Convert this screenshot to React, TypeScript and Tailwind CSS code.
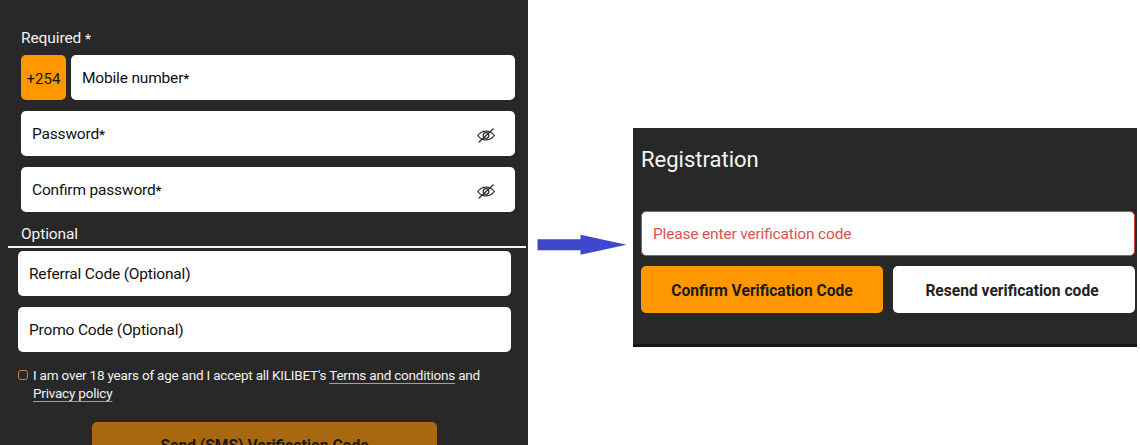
import React from "react";

interface FieldProps {
  label: string;
  required?: boolean;
  secret?: boolean;
}

function EyeOff() {
  return (
    <svg width="20" height="18" viewBox="0 0 20 18" fill="none" stroke="#333333" strokeWidth="1.3" strokeLinecap="round">
      <path d="M1.8 9.500C3.8 6.600 6.6 5.100 10 5.100s6.2 1.500 8.200 4.400c-2 2.900-4.800 4.400-8.200 4.400S3.800 12.400 1.800 9.500z" />
      <circle cx="10" cy="9.500" r="2.800" />
      <path d="M3.100 16.100 17 3" strokeWidth="1.400" />
    </svg>
  );
}

function Asterisk() {
  return <span className="text-[13px] leading-none font-bold">*</span>;
}

function Field({ label, required, secret }: FieldProps) {
  return (
    <div className="flex h-[45px] flex-1 items-center justify-between rounded-[5px] bg-white pr-[19px] pl-[11px] text-[15.5px] leading-[20px] text-[#111111]">
      <span className="pt-px tracking-[-0.18px] [font-feature-settings:'liga']">
        {label}
        {required && <Asterisk />}
      </span>
      {secret && (
        <button type="button" aria-label="Show password" className="mt-[3px]">
          <EyeOff />
        </button>
      )}
    </div>
  );
}

function SignUpForm() {
  return (
    <section className="h-[445px] w-[528px] overflow-hidden bg-[#282828] text-[#f2f2f2]">
      <h2 className="mt-[28px] ml-[21px] text-[15.5px] leading-[20px] tracking-[-0.1px]">
        Required <Asterisk />
      </h2>

      <div className="mt-[7px] mr-[13.5px] ml-[21px] flex flex-col gap-[11px]">
        <div className="flex gap-[5px]">
          <div className="flex h-[45px] w-[45px] items-center justify-center rounded-[5px] bg-[#ff9800] pt-[3px] text-[15px] text-[#151515]">
            +254
          </div>
          <Field label="Mobile number" required />
        </div>
        <div className="flex">
          <Field label="Password" required secret />
        </div>
        <div className="flex">
          <Field label="Confirm password" required secret />
        </div>
      </div>

      <h2 className="mt-[12px] ml-[21px] text-[15.5px] leading-[20px] tracking-[-0.1px]">Optional</h2>
      <div className="mt-[2px] mr-[2px] ml-[8px] h-[2px] bg-[#f5f5f5]" />

      <div className="mt-[3px] mr-[17px] ml-[18px] flex flex-col gap-[11px]">
        <div className="flex">
          <Field label="Referral Code (Optional)" />
        </div>
        <div className="flex">
          <Field label="Promo Code (Optional)" />
        </div>
      </div>

      <div className="mt-[15px] ml-[18px] flex gap-[5px]">
        <span className="mt-[3px] size-[10px] shrink-0 rounded-[3px] border border-[#c98242]" />
        <p className="text-[13.5px] leading-[17.5px] tracking-[-0.21px] whitespace-nowrap">
          I am over 18 years of age and I accept all KILIBET's{" "}
          <a className="underline decoration-[#a0a0a0] decoration-1 underline-offset-[3px] [text-decoration-skip-ink:none]">Terms and conditions</a> and
          <br />
          <a className="underline decoration-[#a0a0a0] decoration-1 underline-offset-[3px] [text-decoration-skip-ink:none]">Privacy policy</a>
        </p>
      </div>

      <button
        type="button"
        className="mt-[20px] ml-[92px] flex h-[46px] w-[345px] items-center justify-center rounded-[5px] bg-[#a7680f] pt-[3px] text-[15.6px] font-bold text-[#1a1a1a]"
      >
        Send (SMS) Verification Code
      </button>
    </section>
  );
}

function Verification() {
  return (
    <section className="mt-[128px] h-[219px] w-[504px] border-b-[3px] border-[#161616] bg-[#282828] pt-[19px] pr-[2px] pl-[8px]">
      <h1 className="text-[22px] leading-[26px] text-[#f5f5f5]">Registration</h1>
      <div className="mt-[38px] flex h-[45px] items-center rounded-[5px] border border-[#d5443d] bg-white pt-[2px] pl-[11px] text-[15.5px] tracking-[-0.17px] text-[#d9534f] [font-feature-settings:'liga']">
        Please enter verification code
      </div>
      <div className="mt-[10px] flex gap-[10px] text-[15.6px] font-bold">
        <button type="button" className="flex h-[47px] w-[242px] items-center justify-center rounded-[5px] bg-[#ff9800] pt-[4px] text-[#1a1a1a]">
          Confirm Verification Code
        </button>
        <button type="button" className="flex h-[47px] w-[242px] items-center justify-center rounded-[5px] bg-white pt-[4px] pr-[4px] text-[#222222]">
          Resend verification code
        </button>
      </div>
    </section>
  );
}

export default function App() {
  return (
    <div className="flex h-[445px] w-[1140px] overflow-hidden bg-white font-['Roboto',sans-serif]">
      <SignUpForm />
      <svg width="105" height="445" viewBox="0 0 105 445" className="shrink-0">
        <path d="M9.500 239.300h43v-4.500l46 10-46 10v-4.500h-43z" fill="#3f48cc" />
      </svg>
      <Verification />
    </div>
  );
}
